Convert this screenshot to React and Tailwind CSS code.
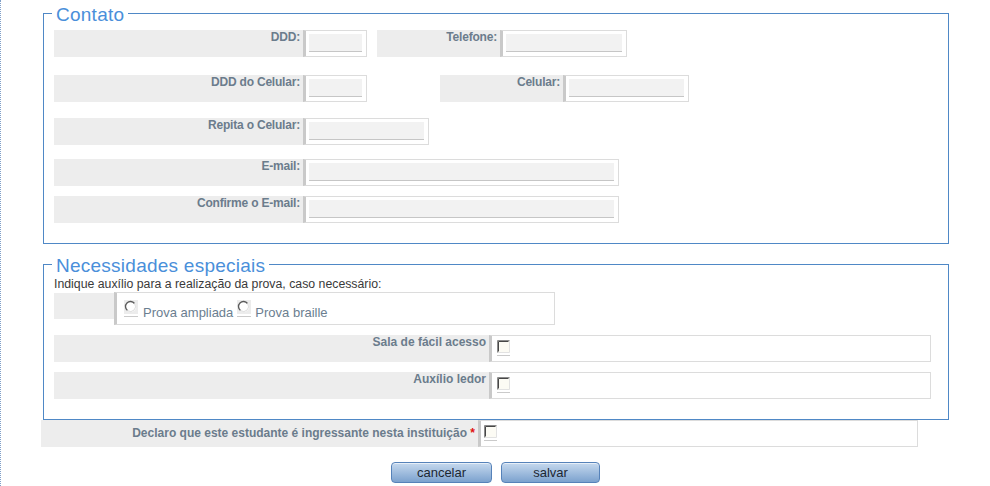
import React from "react";

const labelCls =
  "bg-[#ededed] h-[27px] text-right pr-[3px] text-[12px] leading-[14px] font-bold text-[#6b7c8c] shrink-0";

function Label({ className = "", children }) {
  return <div className={`${labelCls} ${className}`}>{children}</div>;
}

// input box with grey left band
function Field({ className = "" }) {
  return (
    <div
      className={`h-[27px] shrink-0 border border-[#dcdcdc] border-l-[3px] border-l-[#c9c9c9] pt-[3px] pl-[3px] pr-[4px] ${className}`}
    >
      <div className="h-[18px] w-full bg-[#f2f2f2] border-b border-[#c6c6c6]" />
    </div>
  );
}

function Checkbox() {
  return (
    <svg width="14" height="17" viewBox="0 0 14 17">
      <rect x="0" y="0" width="13" height="13" fill="#fcfbf4" />
      <path d="M0.5 12.5 H12.5 V0.5" stroke="#e2e2e2" fill="none" />
      <path d="M0.5 12.5 V0.5 H12.5" stroke="#8c8c8c" fill="none" />
      <path d="M1.5 11.5 V1.5 H11.5" stroke="#474747" fill="none" />
      <path d="M0 15.5 H13" stroke="#cacaca" />
    </svg>
  );
}

function Radio() {
  return (
    <svg width="14" height="17" viewBox="0 0 14 17">
      <rect x="0" y="0" width="14" height="14" fill="#ececec" />
      <circle cx="7" cy="7" r="5" fill="#ffffff" />
      <path d="M10.5 3.5 A5 5 0 1 0 3.5 10.5" stroke="#5a5a5a" strokeWidth="1.3" fill="none" />
      <path d="M3.5 10.5 A5 5 0 0 0 10.5 3.5" stroke="#dedede" strokeWidth="1" fill="none" />
      <path d="M0 16.5 H14" stroke="#cacaca" />
    </svg>
  );
}

function Legend({ children }) {
  return (
    <legend className="ml-[-2px] px-[4px] pt-[4px] leading-[20px] text-[19px] tracking-[0.25px] text-[#4a8fda]">
      {children}
    </legend>
  );
}

function Button({ className = "", children }) {
  return (
    <button
      className={`h-[21px] rounded-[4px] border border-[#5682b9] bg-linear-to-b from-[#c6d9ee] to-[#7ca2ce] shadow-[inset_0_1px_0_rgba(255,255,255,0.6)] text-[13px] leading-[19px] text-[#1c2733] ${className}`}
    >
      {children}
    </button>
  );
}

export default function App() {
  return (
    <div className="w-[990px] min-h-[486px] border-l border-dotted border-[#7f9fc8] bg-white font-['Liberation_Sans',Arial,sans-serif]">
      <div className="pl-[40px] pt-[1px]">
        {/* Contato */}
        <fieldset className="ml-[2px] w-[906px] border border-[#4f88c6] pl-[10px] pb-[20px]">
          <Legend>Contato</Legend>

          <div className="flex mt-[5px] tracking-[-0.2px]">
            <Label className="w-[249px]">DDD:</Label>
            <Field className="w-[64px]" />
            <Label className="w-[123px] ml-[10px]">Telefone:</Label>
            <Field className="w-[127px]" />
          </div>

          <div className="flex mt-[18px] tracking-[-0.2px]">
            <Label className="w-[249px]">DDD do Celular:</Label>
            <Field className="w-[64px]" />
            <Label className="w-[123px] ml-[73px]">Celular:</Label>
            <Field className="w-[126px]" />
          </div>

          <div className="flex mt-[16px] tracking-[-0.2px]">
            <Label className="w-[249px]">Repita o Celular:</Label>
            <Field className="w-[126px]" />
          </div>

          <div className="flex mt-[14px] tracking-[-0.2px]">
            <Label className="w-[249px]">E-mail:</Label>
            <Field className="w-[316px]" />
          </div>

          <div className="flex mt-[10px] tracking-[-0.2px]">
            <Label className="w-[249px]">Confirme o E-mail:</Label>
            <Field className="w-[316px]" />
          </div>
        </fieldset>

        {/* Necessidades especiais */}
        <fieldset className="ml-[2px] mt-[8px] w-[906px] border border-[#4f88c6] pl-[10px] pb-[20px]">
          <Legend>Necessidades especiais</Legend>

          <div className="mt-[1px] text-[12.3px] leading-[14px] text-[#3a3a3a]">
            Indique auxílio para a realização da prova, caso necessário:
          </div>

          <div className="flex items-start mt-[1px]">
            <div className="w-[60px] h-[26px] mt-[1px] bg-[#ededed]" />
            <div className="w-[441px] h-[33px] border border-[#dcdcdc] border-l-[3px] border-l-[#c9c9c9] pl-[7px] pt-[7px] flex items-start text-[13px] leading-[15px] text-[#6b7e90]">
              <Radio />
              <span className="ml-[5px] mt-[5px]">Prova ampliada</span>
              <span className="ml-[4px]">
                <Radio />
              </span>
              <span className="ml-[4px] mt-[5px]">Prova braille</span>
            </div>
          </div>

          <div className="flex mt-[10px]">
            <Label className="w-[435px]">Sala de fácil acesso</Label>
            <div className="w-[442px] h-[27px] border border-[#dcdcdc] border-l-[3px] border-l-[#c9c9c9] pl-[5px] pt-[4px]">
              <Checkbox />
            </div>
          </div>

          <div className="flex mt-[10px]">
            <Label className="w-[435px]">Auxílio ledor</Label>
            <div className="w-[442px] h-[27px] border border-[#dcdcdc] border-l-[3px] border-l-[#c9c9c9] pl-[5px] pt-[4px]">
              <Checkbox />
            </div>
          </div>
        </fieldset>

        <div className="flex">
          <Label className="w-[437px] pt-[6px] leading-[14px]">
            Declaro que este estudante é ingressante nesta instituição{" "}
            <span className="text-[#e01010]">*</span>
          </Label>
          <div className="w-[440px] h-[27px] border border-[#dcdcdc] border-l-[3px] border-l-[#c9c9c9] pl-[3px] pt-[4px]">
            <Checkbox />
          </div>
        </div>
      </div>

      <div className="flex justify-center gap-[9px] mt-[15px]">
        <Button className="w-[101px]">cancelar</Button>
        <Button className="w-[99px]">salvar</Button>
      </div>
    </div>
  );
}
